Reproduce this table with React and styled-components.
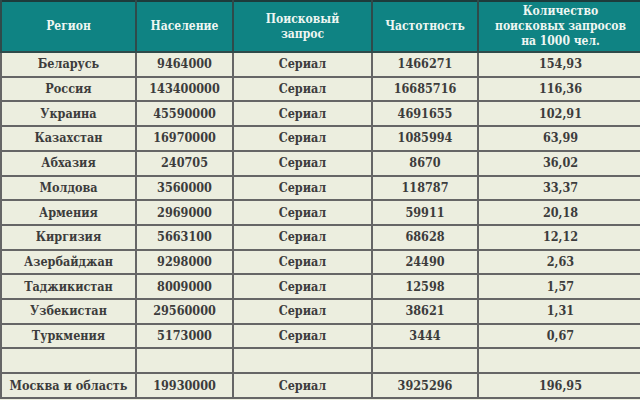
import React from "react";
import styled, { createGlobalStyle } from "styled-components";

const GlobalStyle = createGlobalStyle`
  html, body {
    margin: 0;
    padding: 0;
    background: #eceedf;
  }
`;

const rows = [
  ["Беларусь", "9464000", "Сериал", "1466271", "154,93"],
  ["Россия", "143400000", "Сериал", "16685716", "116,36"],
  ["Украина", "45590000", "Сериал", "4691655", "102,91"],
  ["Казахстан", "16970000", "Сериал", "1085994", "63,99"],
  ["Абхазия", "240705", "Сериал", "8670", "36,02"],
  ["Молдова", "3560000", "Сериал", "118787", "33,37"],
  ["Армения", "2969000", "Сериал", "59911", "20,18"],
  ["Киргизия", "5663100", "Сериал", "68628", "12,12"],
  ["Азербайджан", "9298000", "Сериал", "24490", "2,63"],
  ["Таджикистан", "8009000", "Сериал", "12598", "1,57"],
  ["Узбекистан", "29560000", "Сериал", "38621", "1,31"],
  ["Туркмения", "5173000", "Сериал", "3444", "0,67"],
  ["", "", "", "", ""],
  ["Москва и область", "19930000", "Сериал", "3925296", "196,95"],
];

// header titles, split where the reference breaks the lines
const columns = [
  { title: ["Регион"], width: 135 },
  { title: ["Население"], width: 97 },
  { title: ["Поисковый", "запрос"], width: 139 },
  { title: ["Частотность"], width: 106 },
  { title: ["Количество", "поисковых запросов", "на 1000 чел."], width: 165 },
];

const Table = styled.table`
  width: 640px;
  height: 399px;
  border-collapse: collapse;
  table-layout: fixed;
  border: 2px solid #555;
  border-top-color: #1d3b3b;
`;

const HeadCell = styled.th`
  height: 49px;
  padding: 0 2px;
  background: #0f8383;
  color: #eef6f2;
  font-family: "DejaVu Serif Condensed", "DejaVu Serif", serif;
  font-weight: bold;
  font-size: 12px;
  line-height: 15px;
  text-align: center;
  white-space: nowrap;
  border: 2px solid #2f4a4a;
  border-top: none;
`;

const Cell = styled.td`
  height: 22px;
  padding: 0 4px;
  color: #3c3c3c;
  font-family: "DejaVu Serif Condensed", "DejaVu Serif", serif;
  font-weight: bold;
  font-size: 12.5px;
  line-height: 16px;
  text-align: center;
  white-space: nowrap;
  background: #eceedf;
  border: 2px solid #666;
`;

const App = () => {
  return (
    <>
      <GlobalStyle />
      <Table>
        <colgroup>
          {columns.map((c) => (
            <col key={c.title[0]} style={{ width: c.width }} />
          ))}
        </colgroup>
        <thead>
          <tr>
            {columns.map((c) => (
              <HeadCell key={c.title[0]}>
                {c.title.map((line, k) => (
                  <React.Fragment key={k}>
                    {k > 0 && <br />}
                    {line}
                  </React.Fragment>
                ))}
              </HeadCell>
            ))}
          </tr>
        </thead>
        <tbody>
          {rows.map((r, i) => (
            <tr key={i}>
              {r.map((v, j) => (
                <Cell key={j}>{v}</Cell>
              ))}
            </tr>
          ))}
        </tbody>
      </Table>
    </>
  );
};

export default App;
